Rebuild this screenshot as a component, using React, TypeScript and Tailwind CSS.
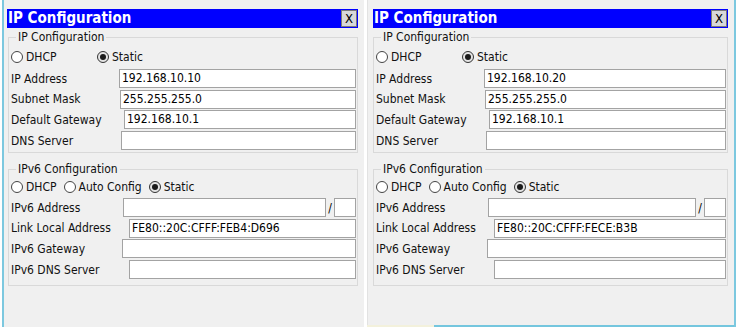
import clsx from 'clsx';

type Field = { label: string; value?: string; offset: number; prefix?: boolean };

const font = 'font-["DejaVu_Sans_Condensed","Liberation_Sans",sans-serif]';

function Radio({ checked, label, className }: { checked?: boolean; label: string; className?: string }) {
  return (
    <span className={clsx('flex items-center gap-[3px]', className)}>
      <span
        className={clsx(
          'w-[12px] h-[12px] rounded-full border flex items-center justify-center',
          checked ? 'border-[#333] bg-[#e4e4e4]' : 'border-[#444] bg-white'
        )}
      >
        {checked && <span className="w-[6px] h-[6px] rounded-full bg-[#1a1a1a]" />}
      </span>
      <span>{label}</span>
    </span>
  );
}

function Input({ value }: { value?: string }) {
  return (
    <div className="flex-1 h-[19px] bg-white border border-[#a3a3a3] pl-[2px] text-[12px] leading-[17px] text-black whitespace-nowrap overflow-hidden">
      {value}
    </div>
  );
}

function Rows({ fields }: { fields: Field[] }) {
  return (
    <div className="flex flex-col gap-[1.7px]">
      {fields.map((f) => (
        <div key={f.label} className="flex items-center h-[19px]">
          <span className="shrink-0 text-[12px] text-[#111]" style={{ width: f.offset }}>
            {f.label}
          </span>
          <Input value={f.value} />
          {f.prefix && (
            <>
              <span className="w-[8px] text-center text-[12px]">/</span>
              <div className="w-[22px] h-[19px] bg-white border border-[#a3a3a3]" />
            </>
          )}
        </div>
      ))}
    </div>
  );
}

function Group({ title, children, className }: { title: string; children: React.ReactNode; className?: string }) {
  return (
    <fieldset className={clsx('border border-[#d9d9d9] pl-[2px] pr-[1px]', className)}>
      <legend className="ml-[5px] px-[2px] text-[12px] leading-[14px] text-[#111]">{title}</legend>
      {children}
    </fieldset>
  );
}

function Dialog({ ip, link, groupIndent }: { ip: string; link: string; groupIndent: string }) {
  const v4: Field[] = [
    { label: 'IP Address', value: ip, offset: 108 },
    { label: 'Subnet Mask', value: '255.255.255.0', offset: 109 },
    { label: 'Default Gateway', value: '192.168.10.1', offset: 113 },
    { label: 'DNS Server', offset: 110 },
  ];
  const v6: Field[] = [
    { label: 'IPv6 Address', offset: 112, prefix: true },
    { label: 'Link Local Address', value: link, offset: 118 },
    { label: 'IPv6 Gateway', offset: 111 },
    { label: 'IPv6 DNS Server', offset: 118 },
  ];

  return (
    <div>
      <div className="h-[19px] bg-[#0000ff] flex items-center justify-between pl-[1px] pr-[1px]">
        <span className="text-white font-bold text-[15px] leading-none">IP Configuration</span>
        <span className="w-[16px] h-[17px] bg-[#d8d8d8] border border-[#7a7a7a] flex items-center justify-center text-[13px] text-black">
          X
        </span>
      </div>

      <Group title="IP Configuration" className={clsx('mt-[2px] pb-[2px]', groupIndent)}>
        <div className="flex items-center h-[18px] mt-[4px] text-[12px] text-[#111]">
          <Radio label="DHCP" className="w-[86px]" />
          <Radio label="Static" checked />
        </div>
        <div className="mt-[3px]">
          <Rows fields={v4} />
        </div>
      </Group>

      <Group title="IPv6 Configuration" className={clsx('mt-[9px] pb-[6px]', groupIndent)}>
        <div className="flex items-center gap-[7px] h-[18px] mt-[2px] text-[12px] text-[#111]">
          <Radio label="DHCP" />
          <Radio label="Auto Config" />
          <Radio label="Static" checked />
        </div>
        <div className="mt-[2px]">
          <Rows fields={v6} />
        </div>
      </Group>
    </div>
  );
}

export default function App() {
  return (
    <div className={clsx('w-[736px] h-[327px] bg-white flex overflow-hidden', font)}>
      <div className="ml-[2px] w-[362px] h-full border-l-[2px] border-[#7cc8df] bg-[#f0f0f0] pl-[3px] pr-[6px] pt-[9px]">
        <Dialog ip="192.168.10.10" link="FE80::20C:CFFF:FEB4:D696" groupIndent="ml-[1px]" />
      </div>

      <div className="ml-[3px] w-[369px] h-full border-r-[2px] border-[#7cc8df] flex flex-col">
        <div className="flex-1 bg-[#f0f0f0] border-l border-[#e2e2e2] pl-[5px] pr-[6px] pt-[9px]">
          <Dialog ip="192.168.10.20" link="FE80::20C:CFFF:FECE:B3B" groupIndent="ml-0" />
        </div>
        <div className="h-[2px] bg-[#74c6de] flex">
          <div className="w-[67px] bg-[#f3f1dc]" />
        </div>
      </div>
    </div>
  );
}
